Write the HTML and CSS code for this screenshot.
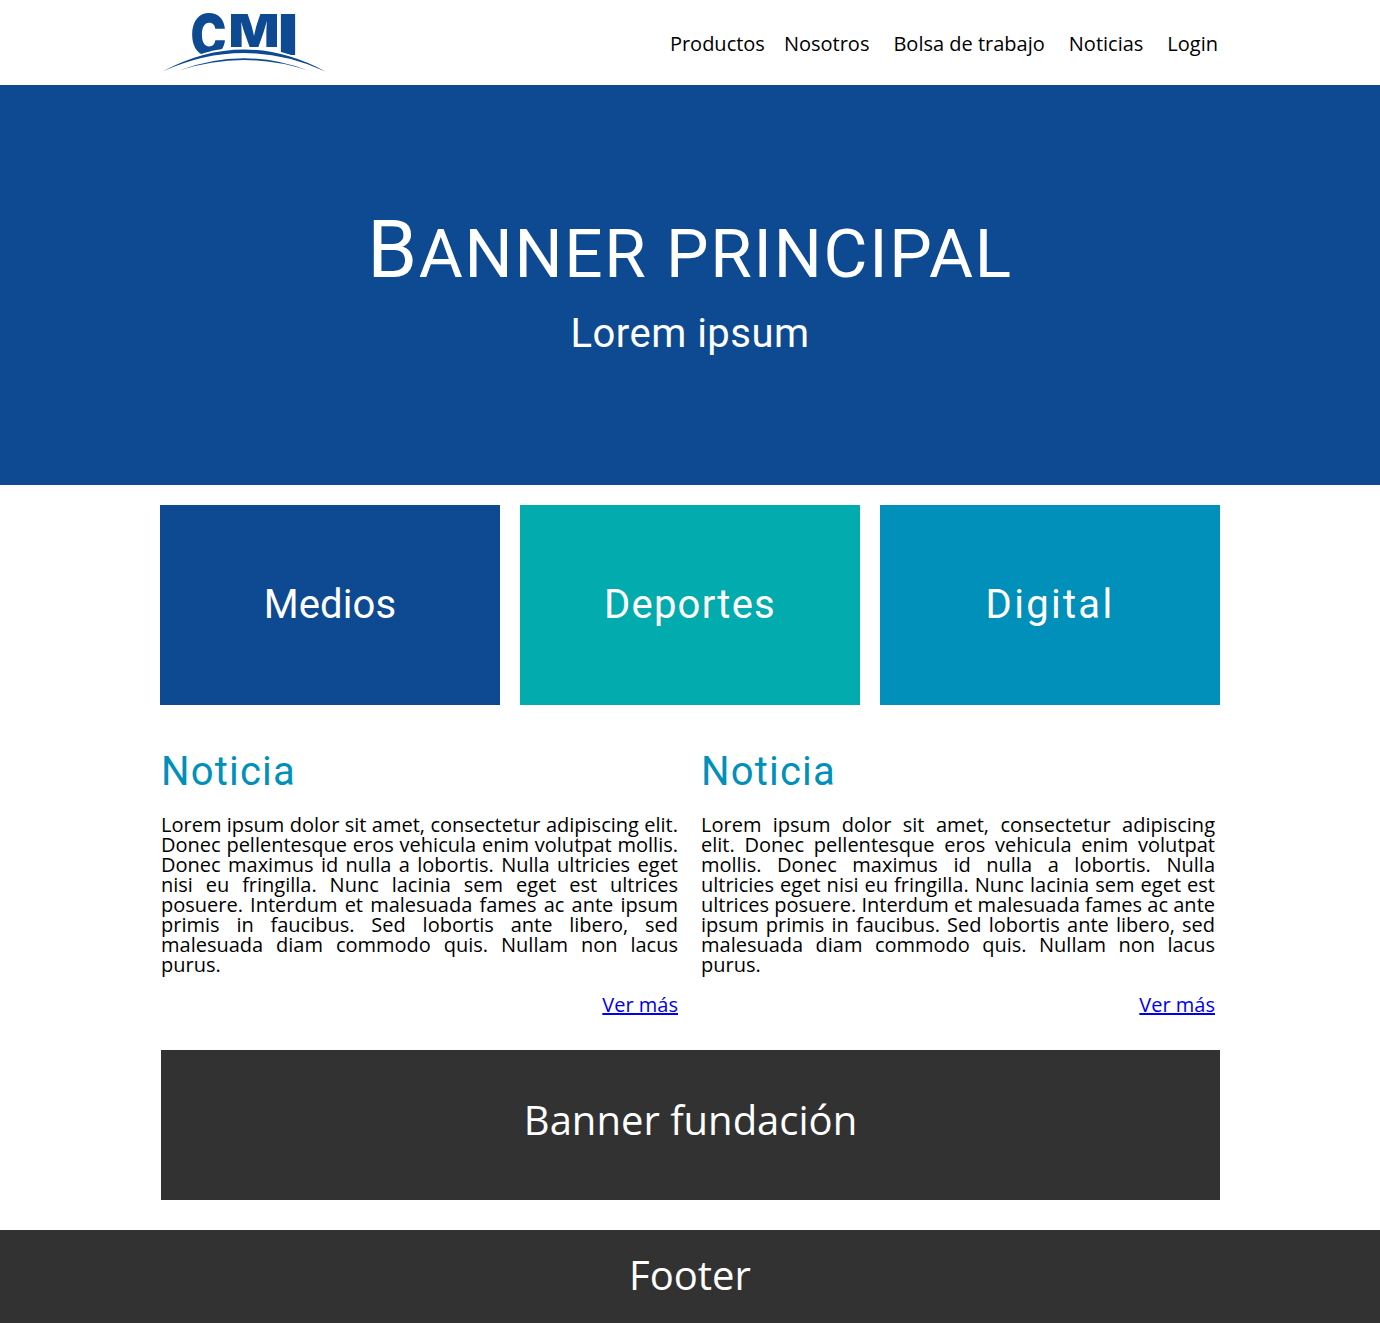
FILE: index.html
```html
<!DOCTYPE html>
<html lang="es">
<head>
<meta charset="utf-8">
<title>CMI</title>
<link rel="stylesheet" href="styles.css">
</head>
<body>
<header class="header">
  <a class="logo" aria-label="CMI">
    <svg width="166" height="62" viewBox="0 0 166 62">
      <g class="logo-letters">
        <text x="28.5" y="43" font-size="56" textLength="36" lengthAdjust="spacingAndGlyphs">C</text>
        <text x="66.5" y="35" font-size="45" textLength="51" lengthAdjust="spacingAndGlyphs">M</text>
        <text x="115.500" y="43" font-size="56" textLength="21" lengthAdjust="spacingAndGlyphs">I</text>
      </g>
      <path class="logo-gap" d="M1 59Q82 11.500 164 59L164 61H1Z"/>
      <path class="logo-arc" d="M0.500 59.500Q82 15.500 163.500 59.500Q82 22.500 0.500 59.500Z"/>
      <path class="logo-arc" d="M17 58.500Q82 34 146 58.500Q82 37.500 17 58.500Z"/>
    </svg>
  </a>
  <nav class="nav">
    <a class="nav-first">Productos</a>
    <a>Nosotros</a>
    <a>Bolsa de trabajo</a>
    <a>Noticias</a>
    <a>Login</a>
  </nav>
</header>
<section class="hero">
  <h1 class="hero-title"><span class="hero-cap">B</span>ANNER PRINCIPAL</h1>
  <p class="hero-sub">Lorem ipsum</p>
</section>
<main class="main">
  <section class="cards">
    <div class="card card-medios">Medios</div>
    <div class="card card-deportes">Deportes</div>
    <div class="card card-digital">Digital</div>
  </section>
  <section class="news">
    <article>
      <h2 class="news-title">Noticia</h2>
      <p class="news-text">Lorem ipsum dolor sit amet, consectetur adipiscing elit. Donec pellentesque eros vehicula enim volutpat mollis. Donec maximus id nulla a lobortis. Nulla ultricies eget nisi eu fringilla. Nunc lacinia sem eget est ultrices posuere. Interdum et malesuada fames ac ante ipsum primis in faucibus. Sed lobortis ante libero, sed malesuada diam commodo quis. Nullam non lacus purus.</p>
      <p class="news-more"><a href="#">Ver más</a></p>
    </article>
    <article>
      <h2 class="news-title">Noticia</h2>
      <p class="news-text">Lorem ipsum dolor sit amet, consectetur adipiscing elit. Donec pellentesque eros vehicula enim volutpat mollis. Donec maximus id nulla a lobortis. Nulla ultricies eget nisi eu fringilla. Nunc lacinia sem eget est ultrices posuere. Interdum et malesuada fames ac ante ipsum primis in faucibus. Sed lobortis ante libero, sed malesuada diam commodo quis. Nullam non lacus purus.</p>
      <p class="news-more"><a href="#">Ver más</a></p>
    </article>
  </section>
  <section class="foundation">Banner fundación</section>
</main>
<footer class="footer">Footer</footer>
</body>
</html>
```
FILE: styles.css
```css
* { box-sizing: border-box; }
body {
  margin: 0;
  background: #fff;
  color: #000;
  font: 20px/20px "Open Sans", sans-serif;
}
h1, h2, p { margin: 0; font-weight: 400; }
.header {
  width: 1060px;
  height: 85px;
  margin: 0 auto;
  padding: 12px 2px 0;
  display: flex;
  justify-content: space-between;
  align-items: flex-start;
}
.logo svg { display: block; }
.logo-letters { font-family: Inter, sans-serif; font-weight: 900; fill: #0e4a91; }
.logo-gap { fill: #fff; }
.logo-arc { fill: #0e4a91; }
.nav { display: flex; gap: 24px; padding-top: 22px; white-space: nowrap; }
.nav-first { margin-right: -5px; }
.hero {
  height: 400px;
  padding-top: 117px;
  background: #0e4a91;
  color: #fff;
  text-align: center;
  font-family: Roboto, sans-serif;
}
.hero-title { font-size: 67.5px; line-height: 96px; letter-spacing: 1.7px; }
.hero-cap { font-size: 80px; }
.hero-sub { margin-top: 8px; font-size: 40px; line-height: 48px; letter-spacing: .5px; }
.main { width: 1060px; margin: 0 auto; }
.cards {
  display: grid;
  grid-template-columns: repeat(3, 1fr);
  gap: 20px;
  padding-top: 20px;
}
.card {
  display: flex;
  align-items: center;
  justify-content: center;
  height: 200px;
  color: #fff;
  font: 40px/40px Roboto, sans-serif;
}
.card-medios { background: #0e4a91; letter-spacing: .1px; }
.card-deportes { background: #02abae; letter-spacing: 1.2px; }
.card-digital { background: #0090b9; letter-spacing: 2.3px; }
.news {
  display: grid;
  grid-template-columns: 517px 514px;
  gap: 23px;
  padding: 47px 0 0 1px;
}
.news-title { color: #0090b9; font: 40px/40px Roboto, sans-serif; letter-spacing: 1.2px; }
.news-text { margin-top: 23px; text-align: justify; }
.news-more { margin-top: 20px; text-align: right; }
.news-more a { color: #00e; }
.foundation {
  height: 150px;
  margin: 35px 0 30px 1px;
  background: #323232;
  color: #fff;
  font-size: 40px;
  line-height: 140px;
  text-align: center;
}
.footer {
  height: 93px;
  background: #323232;
  color: #fff;
  font-size: 40px;
  line-height: 90px;
  text-align: center;
}
```
